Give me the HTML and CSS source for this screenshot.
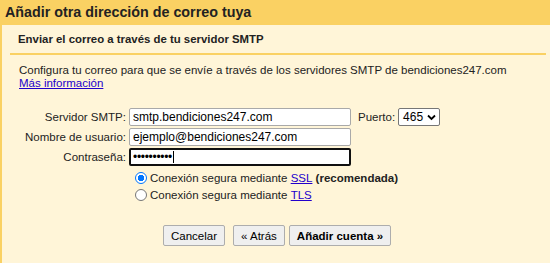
FILE: index.html
```html
<!DOCTYPE html>
<html lang="es">
<head>
<meta charset="utf-8">
<link rel="stylesheet" href="styles.css">
</head>
<body>
<div class="header">Añadir otra dirección de correo tuya</div>
<div class="panel">
  <div class="sub">Enviar el correo a través de tu servidor SMTP</div>
  <div class="rule"></div>
  <p class="intro">Configura tu correo para que se envíe a través de los servidores SMTP de bendiciones247.com<br><a href="#">Más información</a></p>
  <div class="form">
    <label class="lbl">Servidor SMTP:</label>
    <div class="field">
      <input class="txt" type="text" value="smtp.bendiciones247.com">
      <span class="port-lbl">Puerto:</span>
      <span class="select">465<svg class="chev" width="9" height="7" viewBox="0 0 9 7"><path d="M1 1.5 L4.5 5 L8 1.5" fill="none" stroke="#000" stroke-width="1.8"/></svg></span>
    </div>
    <label class="lbl">Nombre de usuario:</label>
    <div class="field"><input class="txt" type="text" value="ejemplo@bendiciones247.com"></div>
    <label class="lbl">Contraseña:</label>
    <div class="field"><span class="txt pwd"><span class="dots">••••••••••</span><span class="caret"></span></span></div>
  </div>
  <div class="radios">
    <div class="radio-row"><span class="radio on"></span>Conexión segura mediante&nbsp;<a href="#">SSL</a>&nbsp;<b>(recomendada)</b></div>
    <div class="radio-row"><span class="radio"></span>Conexión segura mediante&nbsp;<a href="#">TLS</a></div>
  </div>
  <div class="buttons">
    <button class="btn">Cancelar</button>
    <button class="btn back">« Atrás</button>
    <button class="btn primary">Añadir cuenta »</button>
  </div>
</div>
</body>
</html>
```
FILE: styles.css
```css
html, body { margin: 0; padding: 0; }
body {
  background: #fff5d8;
  font-family: "Liberation Sans", Arial, sans-serif;
  font-size: 11.5px;
  color: #222;
  width: 550px;
  height: 263px;
  overflow: hidden;
}
.header {
  background: #fad163;
  height: 25px;
  line-height: 25px;
  padding-left: 5px;
  font-size: 14.3px;
  font-weight: bold;
  color: #222;
}
.panel {
  border-left: 2px solid #fad163;
  height: 238px;
  box-sizing: border-box;
  overflow: hidden;
}
.sub {
  font-weight: bold;
  font-size: 11.4px;
  padding: 7px 0 0 16px;
  line-height: 15px;
  height: 15px;
}
.rule {
  height: 2px;
  background: #fad163;
  margin: 6px 4px 0 8px;
}
.intro {
  margin: 9px 0 0 17px;
  line-height: 13px;
}
a { color: #2200cc; text-decoration: underline; }
.form {
  display: grid;
  grid-template-columns: 127px auto;
  grid-auto-rows: 18px;
  row-gap: 2px;
  margin-top: 18px;
  align-items: center;
}
.lbl { text-align: right; padding-right: 3px; line-height: 18px; }
.field { display: flex; align-items: center; height: 18px; }
.txt {
  box-sizing: border-box;
  width: 222px;
  height: 18px;
  border: 1px solid #a9a9a9;
  border-radius: 2px;
  background: #fff;
  font-family: "Liberation Sans", Arial, sans-serif;
  font-size: 12px;
  padding: 0 3px;
  color: #000;
  margin: 0;
}
.pwd {
  display: flex;
  align-items: center;
  border: 2px solid #101010;
  height: 18px;
  padding-left: 2px;
  overflow: hidden;
}
.dots { font-size: 12px; line-height: 14px; letter-spacing: -0.3px; }
.caret { width: 1px; height: 12px; background: #000; margin-left: 1px; }
.port-lbl { margin-left: 7px; margin-right: 3px; }
.select {
  box-sizing: border-box;
  display: inline-flex;
  align-items: center;
  justify-content: space-between;
  width: 42px;
  height: 18px;
  border: 1px solid #767676;
  border-radius: 2px;
  background: #fff;
  font-size: 12px;
  padding: 0 3px 0 4px;
  color: #000;
}
.radios { margin: 3px 0 0 133px; }
.radio-row { display: flex; align-items: center; height: 17px; }
.radio {
  box-sizing: border-box;
  width: 12px;
  height: 12px;
  border: 1px solid #767676;
  border-radius: 50%;
  background: #fff;
  margin-right: 3px;
}
.radio.on {
  border: 1px solid #0075ff;
  background: radial-gradient(circle, #0075ff 0 3px, #fff 3.5px);
}
.buttons {
  display: flex;
  margin: 22px 0 0 161px;
}
.btn {
  font-family: "Liberation Sans", Arial, sans-serif;
  font-size: 11.5px;
  height: 21px;
  padding: 0 7px;
  border: 1px solid #adadad;
  border-radius: 2px;
  background: #efefef;
  color: #000;
  margin: 0;
}
.back { margin-left: 8px; }
.primary { margin-left: 4px; font-weight: bold; }
```
